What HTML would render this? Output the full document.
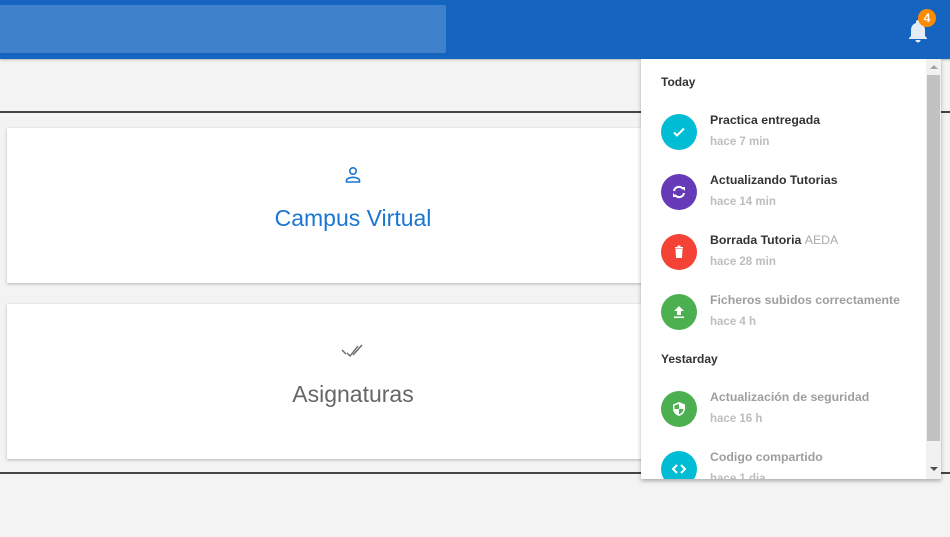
<!DOCTYPE html>
<html><head><meta charset="utf-8"><style>
*{margin:0;padding:0;box-sizing:border-box}
body{width:950px;height:537px;background:#f3f3f3;font-family:"Liberation Sans",sans-serif;position:relative;overflow:hidden}
.hdr{position:absolute;left:0;top:0;width:950px;height:59px;background:#1565c0;box-shadow:0 1px 2px rgba(0,0,0,.25)}
.search{position:absolute;left:0;top:5px;width:446px;height:48px;background:#3f81ca;border-radius:0 2px 2px 0}
.line{position:absolute;left:0;width:950px;height:2px;background:#444}
.card{position:absolute;left:7px;width:692px;height:155px;background:#fff;box-shadow:0 1px 3px rgba(0,0,0,.25);text-align:center}
.card .t{position:absolute;left:0;right:0;top:77px;font-size:23px}
.panel{position:absolute;left:641px;top:59px;width:300px;height:420px;background:#fff;box-shadow:0 2px 4px rgba(0,0,0,.3);overflow:hidden}
.sec{position:absolute;left:20px;font-size:12px;font-weight:bold;color:#333}
.it{position:absolute;left:20px}
.ic{position:absolute;left:0;top:0;width:36px;height:36px;border-radius:50%}
.ic svg{position:absolute;left:9px;top:9px}
.ti{position:absolute;left:49px;top:-1px;white-space:nowrap;font-size:12.3px;font-weight:bold;color:#333}
.su{position:absolute;left:49px;top:22px;white-space:nowrap;font-size:11.5px;font-weight:bold;color:#bdbdbd}
.g{color:#9e9e9e}
.sb{position:absolute;left:285px;top:0;width:15px;height:420px;background:#f1f1f1}
</style></head><body>
<div class="hdr"><div class="search"></div>
<svg style="position:absolute;left:906px;top:18px" width="24" height="26" viewBox="0 0 24 26"><path d="M12 2a2 2 0 0 0-2 2v1C6.5 6 5 9 5 12v6l-2 2v1h18v-1l-2-2v-6c0-3-1.5-6-5-7V4a2 2 0 0 0-2-2zM9.5 22a2.5 2.5 0 0 0 5 0z" fill="#e3ecf8"/></svg>
<div style="position:absolute;left:918px;top:9px;width:18px;height:18px;border-radius:50%;background:#fb8c00;color:#fff;font-size:12px;font-weight:bold;text-align:center;line-height:18px">4</div>
</div>
<div class="line" style="top:111px"></div>
<div class="line" style="top:472px"></div>
<div class="card" style="top:128px">
<svg style="position:absolute;left:337px;top:38px" width="18" height="18" viewBox="0 0 18 18"><circle cx="9" cy="5" r="3.2" fill="none" stroke="#1976d2" stroke-width="1.6"/><path d="M2.5 16v-1.5c0-2 4-3.2 6.5-3.2s6.5 1.2 6.5 3.2V16z" fill="none" stroke="#1976d2" stroke-width="1.6"/></svg>
<div class="t" style="color:#1976d2">Campus Virtual</div></div>
<div class="card" style="top:304px">
<svg style="position:absolute;left:334px;top:40px" width="24" height="14" viewBox="0 0 24 14"><path d="M1 6l4 4M6 9l3 3 8-10M12 11l9-10" fill="none" stroke="#666" stroke-width="1.4"/></svg>
<div class="t" style="color:#666">Asignaturas</div></div>
<div class="panel">
<div class="sec" style="top:16px">Today</div>
<div class="it" style="top:55px"><div class="ic" style="background:#00bcd4"><svg width="18" height="18" viewBox="0 0 18 18"><path d="M4 9.5l3 3 7-7" fill="none" stroke="#fff" stroke-width="2"/></svg></div><div class="ti">Practica entregada</div><div class="su">hace 7 min</div></div>
<div class="it" style="top:115px"><div class="ic" style="background:#673ab7"><svg width="18" height="18" viewBox="0 0 18 18"><path d="M4 8a5 5 0 0 1 9-2M14 10a5 5 0 0 1-9 2" fill="none" stroke="#fff" stroke-width="2"/><path d="M11 4h4v4zM7 14H3v-4z" fill="#fff"/></svg></div><div class="ti">Actualizando Tutorias</div><div class="su">hace 14 min</div></div>
<div class="it" style="top:175px"><div class="ic" style="background:#f44336"><svg width="18" height="18" viewBox="0 0 18 18"><path d="M5 4h8v1.5H5zM7.5 2.5h3V4h-3zM5.5 6h7l-.5 9h-6z" fill="#fff"/></svg></div><div class="ti">Borrada Tutoria <span style="color:#aaa;font-weight:normal">AEDA</span></div><div class="su">hace 28 min</div></div>
<div class="it" style="top:235px"><div class="ic" style="background:#4caf50"><svg width="18" height="18" viewBox="0 0 18 18"><path d="M9 3l5 5h-3v4H7V8H4zM4 13.5h10V15H4z" fill="#fff"/></svg></div><div class="ti g">Ficheros subidos correctamente</div><div class="su">hace 4 h</div></div>
<div class="sec" style="top:293px">Yestarday</div>
<div class="it" style="top:332px"><div class="ic" style="background:#4caf50"><svg width="18" height="18" viewBox="0 0 18 18"><path d="M9 2l6 2.5v4c0 3.5-2.5 6.5-6 7.5-3.5-1-6-4-6-7.5v-4z" fill="#fff"/><path d="M9 4v5h4.5c-.3 2.5-2 4.4-4.5 5.2V9H4.5V5.5z" fill="#4caf50"/></svg></div><div class="ti g">Actualización de seguridad</div><div class="su">hace 16 h</div></div>
<div class="it" style="top:392px"><div class="ic" style="background:#00bcd4"><svg width="18" height="18" viewBox="0 0 18 18"><path d="M7 5L3 9l4 4M11 5l4 4-4 4" fill="none" stroke="#fff" stroke-width="2"/></svg></div><div class="ti g">Codigo compartido</div><div class="su">hace 1 dia</div></div>
<div class="sb"><div style="position:absolute;left:1px;top:16px;width:13px;height:366px;background:#c1c1c1"></div>
<div style="position:absolute;left:4px;top:6px;border:4px solid transparent;border-bottom:4px solid #a3a3a3;border-top:0"></div>
<div style="position:absolute;left:4px;top:408px;border:4px solid transparent;border-top:4px solid #505050;border-bottom:0"></div></div>
</div>
</body></html>
